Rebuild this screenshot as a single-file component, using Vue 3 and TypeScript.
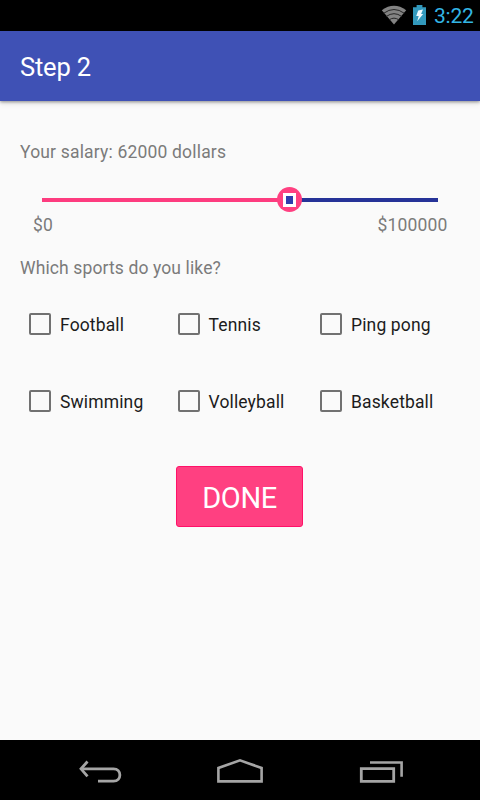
<script setup lang="ts">
import { computed, ref } from 'vue'

interface Sport {
  name: string
  checked: boolean
}

const maxSalary = 100000
const salary = ref(62000)
const percent = computed(() => `${(salary.value / maxSalary) * 100}%`)

const sports = ref<Sport[]>(
  ['Football', 'Tennis', 'Ping pong', 'Swimming', 'Volleyball', 'Basketball'].map((name) => ({
    name,
    checked: false,
  })),
)
</script>

<template>
  <div class="screen">
    <div class="status">
      <svg class="wifi" width="26" height="20" viewBox="0 0 26 20">
        <path d="M0.8 5.3Q13 -3.6 25.2 5.3L13 19.6Z" fill="#838383" />
        <path
          d="M2.8 8.2Q13 0.8 23.2 8.2M5.2 11.5Q13 5.9 20.8 11.5M8.2 14.8Q13 11.5 17.8 14.8"
          fill="none"
          stroke="#262626"
          stroke-width="1"
        />
      </svg>
      <svg class="battery" width="13" height="20" viewBox="0 0 13 20">
        <path d="M0 2.2H3.6V0H9.4V2.2H13V20H0Z" fill="#3299bd" />
        <path d="M5.2 5.4L10 4.6L8.1 9.1H10.2L4.2 16.3L5.7 11H3.2Z" fill="#eefaff" />
      </svg>
      <span class="clock">3:22</span>
    </div>

    <header class="appbar"><h1>Step 2</h1></header>

    <main class="content">
      <p class="label">Your salary: {{ salary }} dollars</p>
      <div class="slider">
        <div class="filled" :style="{ width: percent }"></div>
        <div class="thumb" :style="{ left: percent }"><i class="core"></i></div>
      </div>
      <div class="limits">
        <span>$0</span><span class="max">${{ maxSalary }}</span>
      </div>
      <p class="label question">Which sports do you like?</p>
      <div class="sports">
        <label v-for="sport in sports" :key="sport.name" class="sport">
          <input v-model="sport.checked" type="checkbox" class="box" />
          <span class="name">{{ sport.name }}</span>
        </label>
      </div>
      <button class="done" type="button"><span>DONE</span></button>
    </main>

    <nav class="navbar">
      <svg width="480" height="60" viewBox="0 0 480 60" fill="none" stroke="#a5a5a5">
        <path d="M87.5 21.5L81 28.8L87.5 36.3" stroke-width="2.8" />
        <path d="M81 28.8H113.5C122 28.8 122 41.2 113.5 41.2H98" stroke-width="2.8" />
        <path d="M218.4 41.4V28L240 20.3L261.6 28V41.4Z" stroke-width="2.6" />
        <path d="M361.3 28.6H393.7V41.4H361.3Z" stroke-width="2.8" />
        <path d="M370 22.5H401.6V36.8" stroke-width="2.6" />
      </svg>
    </nav>
  </div>
</template>

<style>
body {
  margin: 0;
  background: #fafafa;
}
</style>

<style scoped>
.screen {
  display: flex;
  flex-direction: column;
  width: 480px;
  height: 800px;
  overflow: hidden;
  background: #fafafa;
  font-family: Roboto, "Liberation Sans", sans-serif;
}
.status {
  display: flex;
  box-sizing: border-box;
  height: 31px;
  padding: 5px 8px 0 0;
  justify-content: flex-end;
  background: #000;
}
.wifi {
  margin-right: 6px;
}
.battery {
  margin-right: 8px;
}
.clock {
  width: 38px;
  color: #33b5e5;
  font-size: 21px;
  line-height: 23px;
  letter-spacing: -0.2px;
  white-space: nowrap;
}
.appbar {
  display: flex;
  z-index: 1;
  height: 70px;
  padding: 0 20px;
  align-items: center;
  background: #3f51b5;
  box-shadow: 0 1px 3px rgba(0, 0, 0, 0.4), 0 3px 6px rgba(0, 0, 0, 0.08);
}
h1 {
  margin: 2px 0 0;
  color: #fff;
  font-size: 25.5px;
  font-weight: 400;
  line-height: 30px;
  letter-spacing: -0.2px;
}
.content {
  display: flex;
  flex: 1;
  flex-direction: column;
  padding: 40px 20px 0;
}
.label,
.limits {
  margin: 0;
  color: #7b7b7b;
  font-size: 17.5px;
  line-height: 22px;
  letter-spacing: 0.18px;
}
.slider {
  position: relative;
  height: 4px;
  margin: 35px 22px 0;
  background: #263398;
}
.filled {
  height: 4px;
  background: #fd3c7f;
}
.thumb {
  display: flex;
  position: absolute;
  top: -11px;
  width: 25px;
  height: 25px;
  margin-left: -11px;
  align-items: center;
  justify-content: center;
  border-radius: 50%;
  background: #ff4081;
}
.core {
  box-sizing: border-box;
  width: 13px;
  height: 14px;
  border: 3px solid #fff;
  background: #2e3eae;
}
.limits {
  display: flex;
  margin: 12px 12.5px 0 13px;
  justify-content: space-between;
}
.question {
  margin-top: 21px;
  letter-spacing: 0.12px;
}
.sports {
  display: grid;
  margin: 30px 0 0 9px;
  grid-template-columns: 148.5px 142.5px 1fr;
  row-gap: 47px;
}
.sport {
  display: flex;
  height: 30px;
  align-items: center;
  gap: 9px;
  color: #1c1c1c;
  font-size: 17.5px;
  letter-spacing: 0.14px;
  white-space: nowrap;
}
.name {
  padding-top: 1px;
}
.box {
  box-sizing: border-box;
  width: 22px;
  height: 22px;
  margin: 0;
  appearance: none;
  border: 2px solid #717171;
  border-radius: 2px;
}
.box:checked {
  border-color: #ff4081;
  background: #ff4081;
}
.done {
  width: 127px;
  height: 61px;
  margin: 50px 0 0 156px;
  padding: 3px 0 0;
  border: 1px solid #ff1169;
  border-radius: 3px;
  background: #ff4081;
  color: #fff;
  font-family: inherit;
  font-size: 29px;
  letter-spacing: -0.4px;
  line-height: 34px;
}
.navbar {
  display: flex;
  height: 60px;
  background: #000;
}
</style>
